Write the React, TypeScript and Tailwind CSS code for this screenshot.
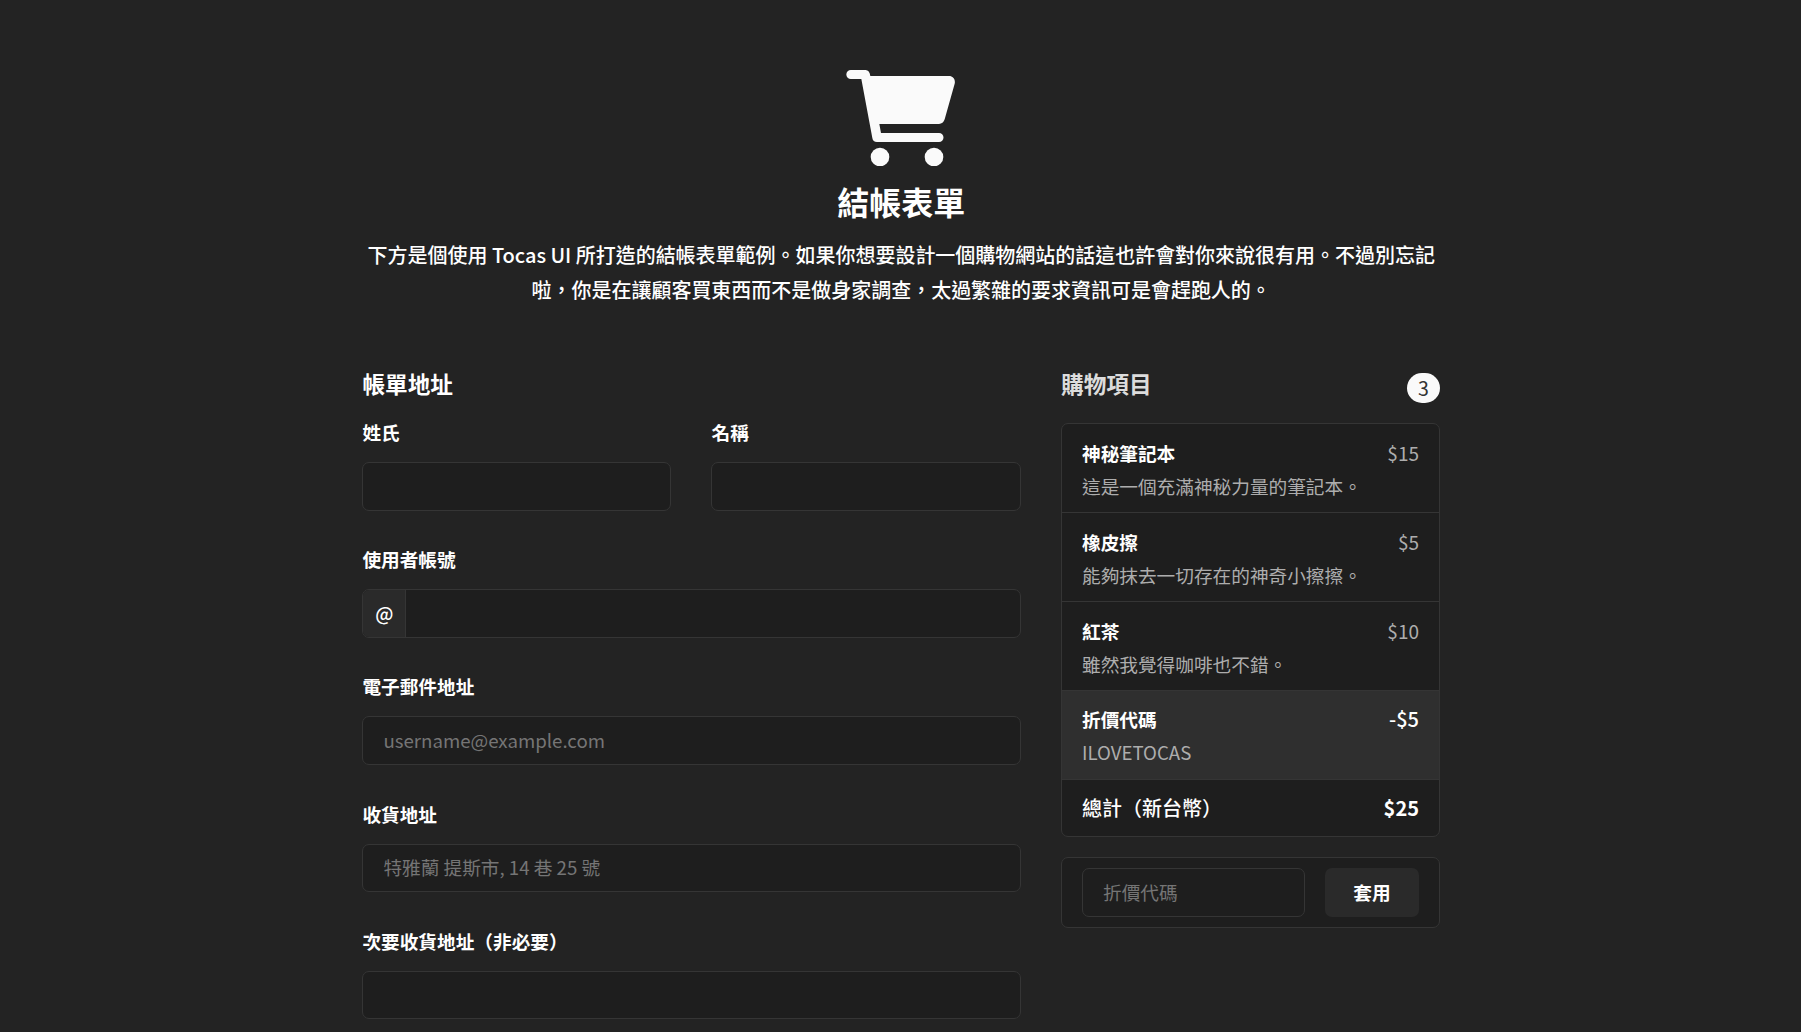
import React from "react";

type Item = {
  name: string;
  note: string;
  price: string;
};

const items: Item[] = [
  { name: "神秘筆記本", note: "這是一個充滿神秘力量的筆記本。", price: "$15" },
  { name: "橡皮擦", note: "能夠抹去一切存在的神奇小擦擦。", price: "$5" },
  { name: "紅茶", note: "雖然我覺得咖啡也不錯。", price: "$10" },
];

const inputClass =
  "block h-[48.6px] w-full min-w-0 rounded-[7px] border border-[#353535] bg-[#1e1e1e] px-5 pb-0.5 text-[18.67px] text-white outline-none placeholder:text-[#757575]";

function CartIcon() {
  return (
    <svg className="mr-px h-24 w-[109px]" viewBox="-1 0 327 288" fill="#fafafa" aria-hidden="true">
      <path d="M13.5 0H58C65 0 71 6 72 18H308C320 18 328 28 325 41L295 148C292 157 286 162 278 162H99L104 189H278A13.5 13.5 0 0 1 278 216H92C84 216 79 212 78 204L45 27H13.5A13.5 13.5 0 0 1 13.5 0Z" />
      <circle cx="101" cy="261" r="28" />
      <circle cx="263" cy="261" r="28" />
    </svg>
  );
}

function Field({ label, children }: { label: string; children: React.ReactNode }) {
  return (
    <label className="block h-[127.2px] min-w-0">
      <span className="mb-[18px] block h-6 text-[18.67px] leading-6 font-bold">{label}</span>
      {children}
    </label>
  );
}

function BillingForm() {
  return (
    <form className="w-[658.2px]">
      <h2 className="mb-[21px] text-[22.67px] leading-[30px] font-bold">帳單地址</h2>
      <div className="grid grid-cols-2 gap-10">
        <Field label="姓氏">
          <input className={inputClass} />
        </Field>
        <Field label="名稱">
          <input className={inputClass} />
        </Field>
      </div>
      <Field label="使用者帳號">
        <span className="flex h-[48.6px] overflow-hidden rounded-[7px] border border-[#353535] bg-[#1e1e1e]">
          <span className="flex w-[43px] shrink-0 items-center justify-center border-r border-[#353535] bg-[#2a2a2a] text-[18.67px] font-medium">
            @
          </span>
          <input className="min-w-0 flex-1 bg-transparent px-5 outline-none" />
        </span>
      </Field>
      <Field label="電子郵件地址">
        <input className={inputClass} placeholder="username@example.com" />
      </Field>
      <Field label="收貨地址">
        <input className={inputClass} placeholder="特雅蘭 提斯市, 14 巷 25 號" />
      </Field>
      <Field label="次要收貨地址（非必要）">
        <input className={inputClass} />
      </Field>
    </form>
  );
}

function Cart() {
  return (
    <aside className="w-[379px]">
      <div className="mb-5 flex h-[34px] items-start justify-between">
        <h2 className="text-[22.67px] leading-[30px] font-bold text-[#dcdcdc]">購物項目</h2>
        <span className="mt-1 flex h-[30px] w-[33px] items-center justify-center rounded-full bg-[#fafafa] text-[19.5px] text-[#333333]">
          3
        </span>
      </div>

      <div className="overflow-hidden rounded-[7px] border border-[#353535] bg-[#1e1e1e] text-[18.67px]">
        {items.map((item) => (
          <div
            key={item.name}
            className="flex h-[89px] items-start justify-between border-b border-[#353535] px-5 pt-3 leading-[33px] text-[#adadad]"
          >
            <div>
              <div className="font-bold text-white">{item.name}</div>
              <div>{item.note}</div>
            </div>
            <div className="text-[19px]">{item.price}</div>
          </div>
        ))}
        <div className="flex h-[89px] items-start justify-between border-b border-[#353535] bg-[#2f2f2f] px-5 pt-[11px] leading-[33px] text-white">
          <div>
            <div className="font-bold">折價代碼</div>
            <div className="text-[#adadad]">ILOVETOCAS</div>
          </div>
          <div className="text-[20px] font-medium">-$5</div>
        </div>
        <div className="flex h-14 items-center justify-between px-5 text-[20px] text-white">
          <span className="font-medium">總計（新台幣）</span>
          <span className="font-bold">$25</span>
        </div>
      </div>

      <div className="mt-5 flex h-[71px] items-start gap-5 rounded-[7px] border border-[#353535] bg-[#1e1e1e] px-5 pt-2.5">
        <input className={inputClass} placeholder="折價代碼" />
        <button
          type="button"
          className="h-[49px] w-[94px] shrink-0 rounded-[7px] bg-[#2a2a2a] pb-0.5 text-[18.67px] font-bold text-white"
        >
          套用
        </button>
      </div>
    </aside>
  );
}

export default function App() {
  return (
    <div
      lang="zh-TW"
      className="h-[1032px] overflow-hidden bg-[#232323] font-['Noto_Sans_CJK_TC',sans-serif] text-white"
    >
      <div className="ml-[362.4px] w-[1077.6px] pt-[70px]">
        <header className="flex h-[299px] flex-col items-center text-center">
          <CartIcon />
          <h1 className="mt-[11px] text-[32px] leading-[48px] font-bold">結帳表單</h1>
          <p className="mt-3 text-[20px] leading-[35px] font-medium tracking-[-0.02px]">
            下方是個使用 Tocas UI 所打造的結帳表單範例。如果你想要設計一個購物網站的話這也許會對你來說很有用。不過別忘記啦，你是在讓顧客買東西而不是做身家調查，太過繁雜的要求資訊可是會趕跑人的。
          </p>
        </header>
        <main className="flex items-start justify-between">
          <BillingForm />
          <Cart />
        </main>
      </div>
    </div>
  );
}
